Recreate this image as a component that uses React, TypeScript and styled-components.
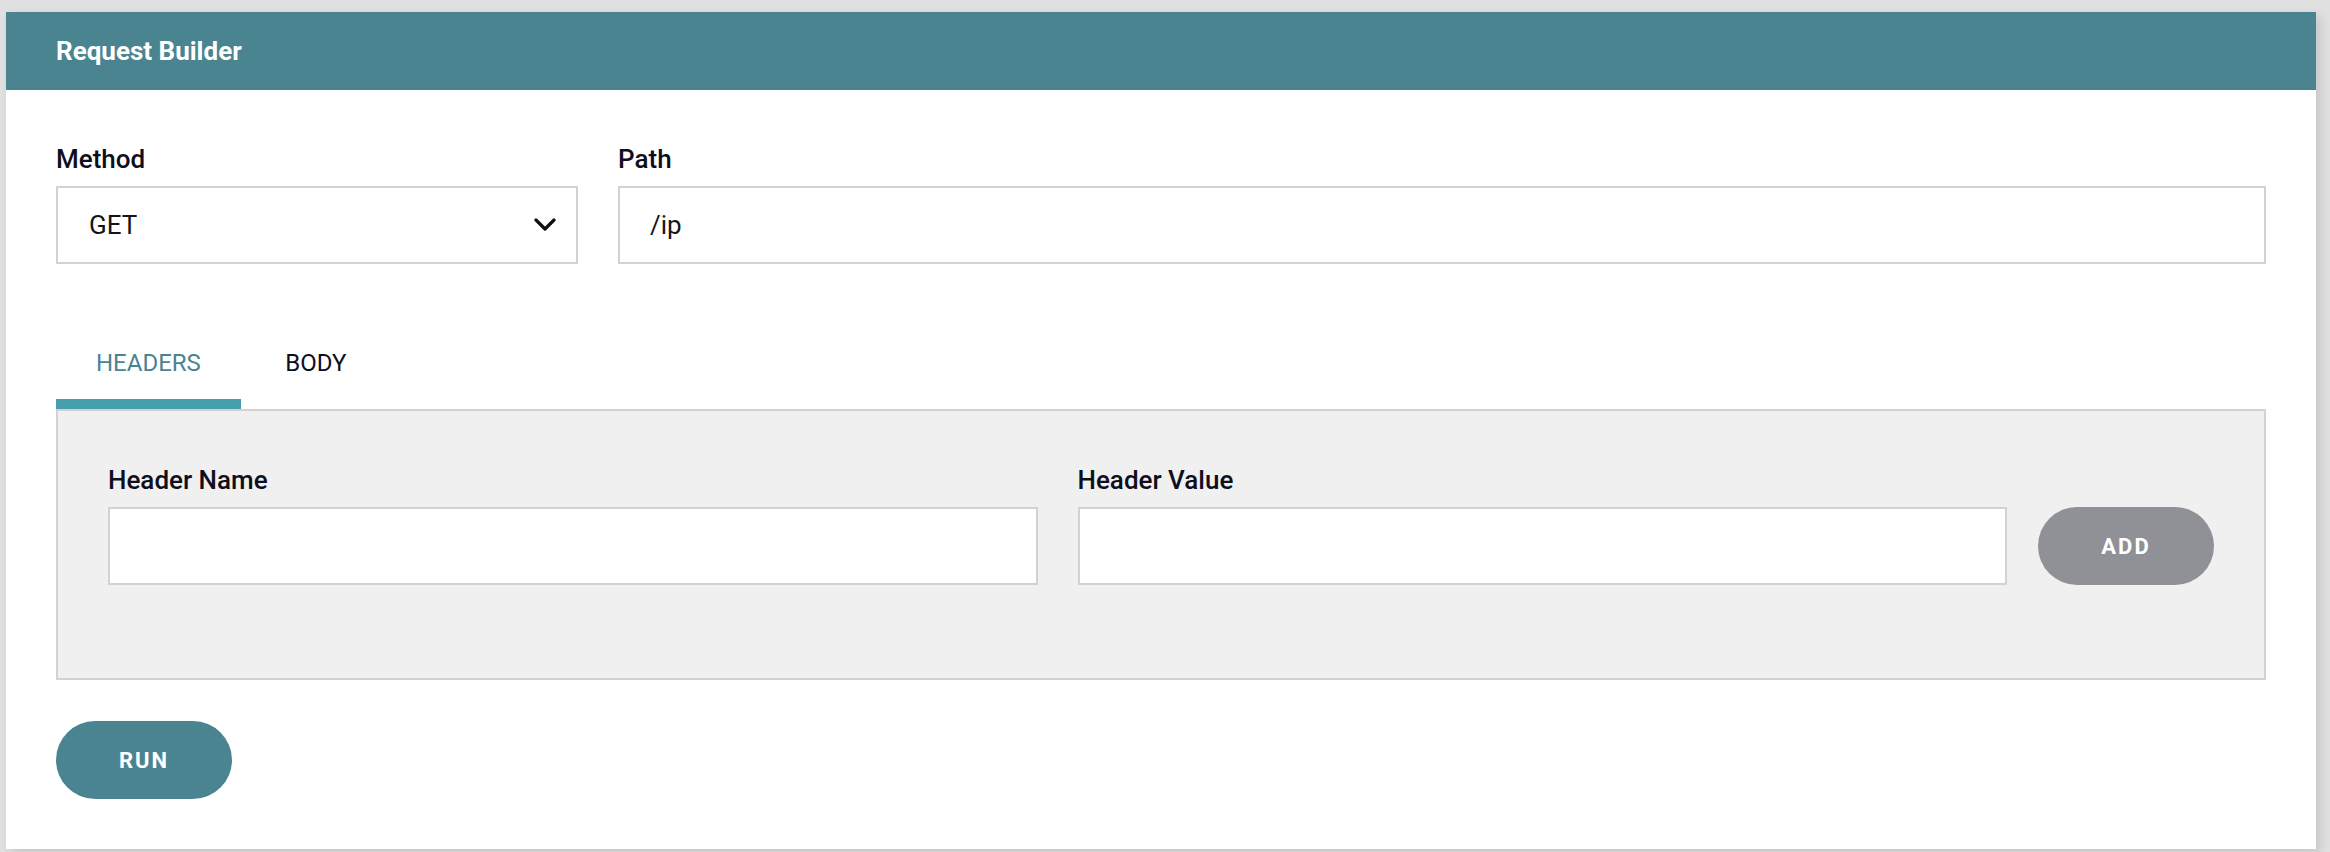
import * as React from 'react';
import styled, { createGlobalStyle } from 'styled-components';

const GlobalStyle = createGlobalStyle`
    html, body {
        margin: 0;
        padding: 0;
        background: #e0e0e0;
        font-family: Roboto, "Liberation Sans", Arial, sans-serif;
    }
    * {
        box-sizing: border-box;
    }
`;

const Page = styled.div`
    padding: 12px 14px 4px 6px;
`;

const Card = styled.section`
    background: #ffffff;
    box-shadow: 4px 4px 10px rgba(0, 0, 0, 0.12);
`;

const CardHeader = styled.header`
    height: 78px;
    display: flex;
    align-items: center;
    padding: 0 50px;
    background: #4a8491;
    color: #ffffff;
    font-size: 26px;
    font-weight: 700;
`;

const CardBody = styled.div`
    padding: 54px 50px 50px;
`;

const FieldRow = styled.div`
    display: grid;
    grid-template-columns: 522px 1fr;
    column-gap: 40px;
`;

const Field = styled.div`
    display: flex;
    flex-direction: column;
    min-width: 0;
`;

const Label = styled.label`
    font-size: 26px;
    font-weight: 500;
    color: #0e0e1c;
    margin-bottom: 12px;
`;

const TextInput = styled.input`
    height: 78px;
    width: 100%;
    border: 2px solid #d2d2d2;
    background: #ffffff;
    padding: 0 30px;
    font-family: inherit;
    font-size: 26px;
    color: #151515;
    outline: none;
`;

const SelectBox = styled.div`
    height: 78px;
    border: 2px solid #d2d2d2;
    background: #ffffff;
    padding: 0 20px 0 31px;
    display: flex;
    align-items: center;
    justify-content: space-between;
    font-size: 26px;
    color: #151515;
`;

const TabBar = styled.div`
    display: flex;
    margin-top: 53px;
`;

const Tab = styled.div<{ $active?: boolean }>`
    position: relative;
    height: 92px;
    min-width: 150px;
    padding: 0 40px;
    display: flex;
    align-items: center;
    justify-content: center;
    font-size: 24px;
    text-transform: uppercase;
    color: ${p => (p.$active ? '#4a8491' : '#0e0e1c')};
    cursor: pointer;

    &::after {
        content: '';
        position: absolute;
        left: 0;
        right: 0;
        bottom: 0;
        height: 10px;
        background: ${p => (p.$active ? '#479fae' : 'transparent')};
    }
`;

const TabPanel = styled.div`
    background: #f0f0f0;
    border: 2px solid #d2d2d2;
    padding: 54px 50px 93px;
`;

const HeaderRow = styled.div`
    display: grid;
    grid-template-columns: 1fr 1fr auto;
    column-gap: 40px;
    align-items: end;
`;

const PillButton = styled.button<{ $tone: 'primary' | 'muted' }>`
    height: 78px;
    width: 176px;
    border: none;
    border-radius: 39px;
    background: ${p => (p.$tone === 'primary' ? '#4a8491' : '#909097')};
    color: #ffffff;
    font-family: inherit;
    font-size: 22px;
    font-weight: 700;
    letter-spacing: 2px;
    text-transform: uppercase;
    cursor: pointer;
`;

const AddButton = styled(PillButton)`
    margin-left: -9px;
`;

const RunButton = styled(PillButton)`
    margin-top: 41px;
`;

const Chevron = () => (
    <svg width="22" height="14" viewBox="0 0 22 14" fill="none">
        <polyline points="2,2 11,11 20,2" stroke="#111" strokeWidth="3.2" strokeLinecap="round" strokeLinejoin="round" />
    </svg>
);

export default function App() {
    const [tab, setTab] = React.useState('headers');
    return (
        <>
            <GlobalStyle />
            <Page>
                <Card>
                    <CardHeader>Request Builder</CardHeader>
                    <CardBody>
                        <FieldRow>
                            <Field>
                                <Label>Method</Label>
                                <SelectBox>
                                    <span>GET</span>
                                    <Chevron />
                                </SelectBox>
                            </Field>
                            <Field>
                                <Label>Path</Label>
                                <TextInput defaultValue="/ip" />
                            </Field>
                        </FieldRow>
                        <TabBar>
                            <Tab $active={tab === 'headers'} onClick={() => setTab('headers')}>Headers</Tab>
                            <Tab $active={tab === 'body'} onClick={() => setTab('body')}>Body</Tab>
                        </TabBar>
                        <TabPanel>
                            <HeaderRow>
                                <Field>
                                    <Label>Header Name</Label>
                                    <TextInput />
                                </Field>
                                <Field>
                                    <Label>Header Value</Label>
                                    <TextInput />
                                </Field>
                                <AddButton $tone="muted">Add</AddButton>
                            </HeaderRow>
                        </TabPanel>
                        <RunButton $tone="primary">Run</RunButton>
                    </CardBody>
                </Card>
            </Page>
        </>
    );
}
